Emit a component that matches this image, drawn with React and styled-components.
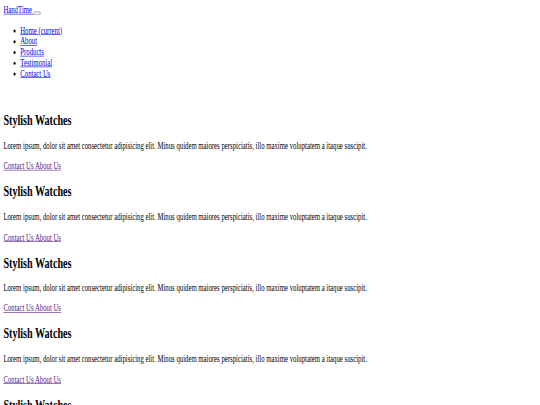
import React from 'react'
import styled, { createGlobalStyle } from 'styled-components'

const GlobalStyle = createGlobalStyle`
  html, body {
    margin: 0;
    overflow: hidden;
    background: #fff;
  }
  body {
    font-family: "Liberation Serif", "Times New Roman", serif;
    font-size: 16px;
    color: #000;
  }
`

// the reference was shot on a wide page and squeezed into 540x405
const Page = styled.div`
  width: 1280px;
  padding: 8px;
  box-sizing: border-box;
  transform: scale(0.421875, 0.6);
  transform-origin: 0 0;
`

const Nav = styled.nav``

const Brand = styled.a`
  color: #0000ee;
  text-decoration: underline;
`

const Toggler = styled.button``

const NavList = styled.ul`
  margin: 16px 0;
  padding-left: 40px;
`

const NavLink = styled.a`
  color: #0000ee;
  text-decoration: underline;
`

const Main = styled.main`
  padding-top: 19px;
`

const Section = styled.section``

const Title = styled.h2`
  font-size: 24px;
  margin: 19.92px 0;
`

const Text = styled.p`
  margin: 16px 0;
`

const Visited = styled.a`
  color: #551a8b;
  text-decoration: underline;
`

const links = ['Home (current)', 'About', 'Products', 'Testimonial', 'Contact Us']

const App = () => {
  return (
    <>
      <GlobalStyle />
      <Page>
        <Nav>
          <Brand href="#">HandTime </Brand>
          <Toggler type="button"><span></span></Toggler>
          <NavList>
            {links.map((l) => (
              <li key={l}>
                <NavLink href="#">{l}</NavLink>
              </li>
            ))}
          </NavList>
        </Nav>
        <Main>
          {[1, 2, 3, 4, 5, 6].map((n) => (
            <Section key={n}>
              <Title>Stylish Watches</Title>
              <Text>
                Lorem ipsum, dolor sit amet consectetur adipisicing elit. Minus quidem maiores perspiciatis, illo maxime voluptatem a itaque suscipit.
              </Text>
              <Text>
                <Visited href="#">Contact Us </Visited><Visited href="#">About Us</Visited>
              </Text>
            </Section>
          ))}
        </Main>
      </Page>
    </>
  )
}

export default App
